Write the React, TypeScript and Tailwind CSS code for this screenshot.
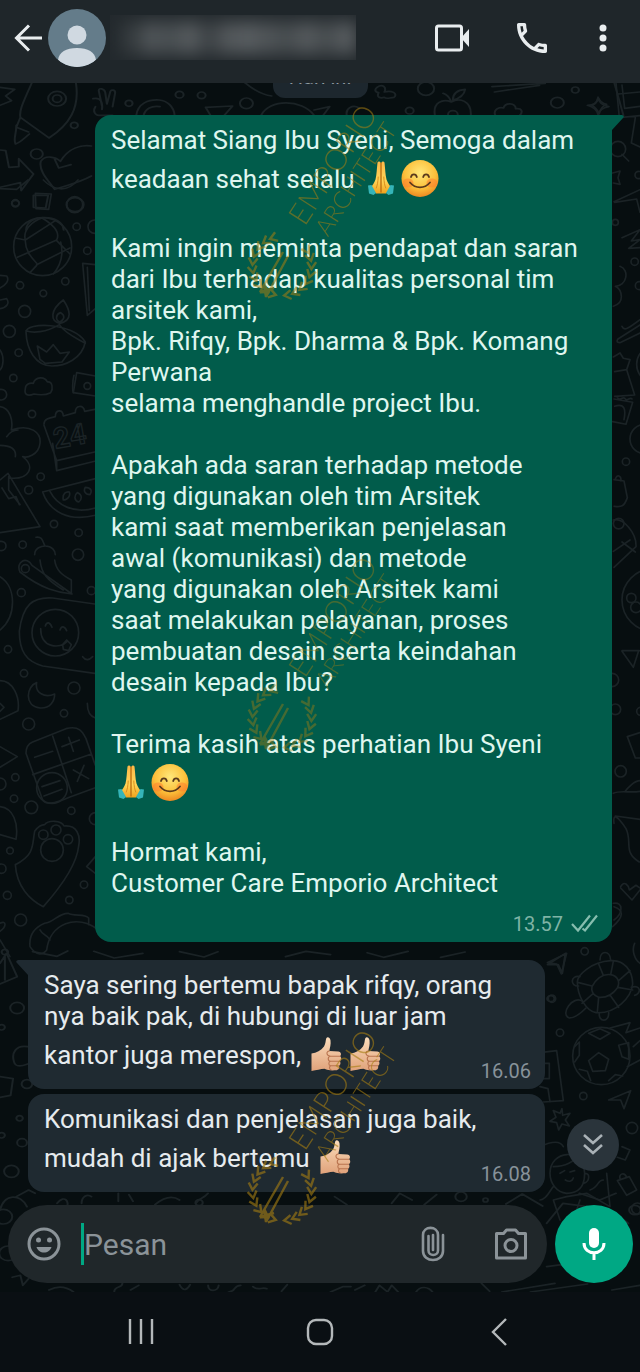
import React, { useState } from 'react';

type EmojiName = 'hands' | 'smile' | 'thumb';

type Line = {
  text?: string;
  emojis?: EmojiName[];
};

type Message = {
  id: number;
  mine: boolean;
  first: boolean;
  time: string;
  lines: Line[];
};

const messages: Message[] = [
  {
    id: 1,
    mine: true,
    first: true,
    time: '13.57',
    lines: [
      { text: 'Selamat Siang Ibu Syeni, Semoga dalam' },
      { text: 'keadaan sehat selalu ', emojis: ['hands', 'smile'] },
      {},
      { text: 'Kami ingin meminta pendapat dan saran' },
      { text: 'dari Ibu terhadap kualitas personal tim' },
      { text: 'arsitek kami,' },
      { text: 'Bpk. Rifqy, Bpk. Dharma & Bpk. Komang' },
      { text: 'Perwana' },
      { text: 'selama menghandle project Ibu.' },
      {},
      { text: 'Apakah ada saran terhadap metode' },
      { text: 'yang digunakan oleh tim Arsitek' },
      { text: 'kami saat memberikan penjelasan' },
      { text: 'awal (komunikasi) dan metode' },
      { text: 'yang digunakan oleh Arsitek kami' },
      { text: 'saat melakukan pelayanan, proses' },
      { text: 'pembuatan desain serta keindahan' },
      { text: 'desain kepada Ibu?' },
      {},
      { text: 'Terima kasih atas perhatian Ibu Syeni' },
      { emojis: ['hands', 'smile'] },
      {},
      { text: 'Hormat kami,' },
      { text: 'Customer Care Emporio Architect' },
    ],
  },
  {
    id: 2,
    mine: false,
    first: true,
    time: '16.06',
    lines: [
      { text: 'Saya sering bertemu bapak rifqy, orang' },
      { text: 'nya baik pak, di hubungi di luar jam' },
      { text: 'kantor juga merespon, ', emojis: ['thumb', 'thumb'] },
    ],
  },
  {
    id: 3,
    mine: false,
    first: false,
    time: '16.08',
    lines: [{ text: 'Komunikasi dan penjelasan juga baik,' }, { text: 'mudah di ajak bertemu ', emojis: ['thumb'] }],
  },
];

function Emoji({ name }: { name: EmojiName }) {
  if (name === 'smile') {
    return (
      <svg role="img" aria-label="smile" className="w-[39px] h-[38px] shrink-0" viewBox="0 0 39 38">
        <circle cx="20" cy="18.500" r="18.500" fill="url(#face)" />
        <ellipse cx="8" cy="23" rx="5.500" ry="4.500" fill="#ff7d2e" opacity="0.55" />
        <ellipse cx="32" cy="23" rx="5.500" ry="4.500" fill="#ff7d2e" opacity="0.55" />
        <g fill="none" stroke="#5b3a1c" strokeWidth="1.800" strokeLinecap="round">
          <path d="M11 17c.8-3.600 5-3.600 5.800 0M23.200 17c.8-3.600 5-3.600 5.800 0" />
          <path d="M10 22.500c5.500 6.500 14.500 6.500 20 0" />
        </g>
      </svg>
    );
  }

  if (name === 'hands') {
    return (
      <svg role="img" aria-label="folded hands" className="w-[39px] h-[38px] shrink-0" viewBox="0 0 39 38">
        <path d="M16.500 2.500c.8-1.500 2.400-1.200 3 .3h1c.6-1.500 2.200-1.800 3-.3.8 7 .8 12 2 17 1.200 4 3.500 5.500 4.500 8.500L25 33.500H15L10 28c1-3 3.300-4.500 4.500-8.500 1.200-5 1.200-10 2-17z" fill="url(#skin)" />
        <path d="M20 3v29" fill="none" stroke="#b8690f" strokeWidth="1.300" strokeLinecap="round" />
        <path d="M17.200 17c-.2 5-.8 8-1.900 11M22.800 17c.2 5 .8 8 1.900 11" fill="none" stroke="#d98f1c" strokeWidth="1" strokeLinecap="round" />
        <path d="M7 25.500l3.500-.5 4.500 8-2.500 2-4.500-1.500z" fill="#35b4b8" />
        <path d="M33 25.500l-3.500-.5-4.500 8 2.500 2 4.500-1.500z" fill="#35b4b8" />
      </svg>
    );
  }

  return (
    <svg role="img" aria-label="thumbs up" className="w-[39px] h-[38px] shrink-0" viewBox="0 0 39 38">
      <path d="M4.500 17.500c5-.5 9.500-3 12.500-7 1.800-3 1.500-6 2.300-8.300 1.200-1.800 3.700-.6 4.200 2 .6 4-.6 7.500-1.200 10.800l9 .5c3 .4 3.300 3.300 1.800 4.700 1.800 1.600 1.500 4-.3 5 1.200 1.800.7 3.800-.8 4.600.8 2.500-.7 4.400-3 4.500-5 .4-8.500 0-11.500-1.500-4 .4-8 1.200-13 2.200z" fill="url(#thumb)" />
      <path d="M33 20.200H23.500c-3 .3-3 4.700 0 5h9.300M23.700 25.200c-2.500.3-2.500 4.300 0 4.600H32M24 29.800c-2 .4-2 3.600 0 4M22.300 15c-3.300.3-3.300 4.700 1.200 5.200" fill="none" stroke="#b9744f" strokeWidth="1.100" strokeLinecap="round" />
    </svg>
  );
}

// shared gradients of the emojis
function EmojiDefs() {
  return (
    <svg className="absolute w-0 h-0" aria-hidden="true">
      <defs>
        <radialGradient id="face" cx="0.500" cy="0.350" r="0.700">
          <stop offset="0" stopColor="#ffe77a" />
          <stop offset="0.600" stopColor="#fcc03a" />
          <stop offset="1" stopColor="#ea7d1c" />
        </radialGradient>
        <linearGradient id="skin" x1="0" y1="0" x2="0" y2="1">
          <stop offset="0" stopColor="#fdb94a" />
          <stop offset="0.600" stopColor="#ffd458" />
          <stop offset="1" stopColor="#f0a21c" />
        </linearGradient>
        <linearGradient id="thumb" x1="0" y1="0" x2="0" y2="1">
          <stop offset="0" stopColor="#fbdcbb" />
          <stop offset="1" stopColor="#e0a27a" />
        </linearGradient>
      </defs>
    </svg>
  );
}

function Dots({ at }: { at: number[][] }) {
  return (
    <>
      {at.map(([x, y, r]) => (
        <circle key={`${x}-${y}`} cx={x} cy={y} r={r} />
      ))}
    </>
  );
}

// doodle wallpaper behind the messages
function Wallpaper() {
  return (
    <svg className="absolute inset-0 w-full h-full" viewBox="0 0 640 1372" preserveAspectRatio="xMidYMin slice" aria-hidden="true" fill="none" stroke="#1b2326" strokeWidth="5" strokeLinecap="round" strokeLinejoin="round">
      {/* upper strip */}
      <g transform="translate(0 0) scale(.408 .3333)">
        <path d="M0 262l36 6-22 20 14 14-28 14M78 248C60 300 46 330 50 352l70 62c50-40 76-90 66-166M50 352l-10 30 30 14M40 376c0 30-8 40-2 56 12-4 20-16 34-30" />
        <path d="M228 296c20-6 24 14 22 32M250 318l-8-46c0-10 14-6 16 6l4 34 8-36c2-10 14-6 12 4l-6 40M234 320c-8 14 0 26 8 26h34" />
        <path d="M334 346c4-36 30-48 56-46 20 2 36 20 38 46M352 346c4-20 20-30 40-26M504 322l66-4-20 28M516 346l-12-24M640 346c20-50 100-50 130 0M600 248c20 20 40 36 66 40M770 330l38-10-16 26M850 346c-4-20 14-34 30-22" />
        <path d="M924 262c14-12 24 0 18 14 18-6 34 4 24 16-14 2-20 6-24 0-10 4-20 0-14-14-10-2-10-10-4-16M1066 346c-6-40 20-50 40-40 20-14 50-4 48 40M1106 306c-4-14-10-22-20-26M1110 300c0-20 10-30 30-32-2 16-10 26-30 32M1206 260l130-10M1212 276l110-20M1214 346c-6-16 8-26 20-22 4-18 30-16 30 2 16-2 18 10 10 20M1440 316c16 0 24-8 26-22 2 14 10 22 26 26-16 4-22 10-26 24-2-14-10-22-26-28M1506 250l22 96M1516 282l52-6" />
        <path d="M0 450l14 2 8 50 24-2 0-24 36 46-30 50-2-24-50 14M100 484c10-20 36-14 48 0 20-40 50-50 76-46M100 484c-6 30 20 60 34 84 26-10 60-20 90-40M134 478l10 26 30-10" />
        <path d="M82 586l36 0-6 38-30-2zM64 690c0-50 90-50 92 0" />
        <Dots at={[[140, 296, 22], [140, 296, 11], [440, 284, 10], [494, 286, 10], [604, 310, 16], [316, 310, 9], [182, 376, 9], [90, 462, 15], [1044, 266, 20], [1004, 332, 10], [1110, 344, 12], [1366, 308, 16], [1410, 270, 9], [38, 610, 9], [184, 614, 21]]} />
      </g>

      {/* left strip, upper half */}
      <g transform="translate(0 180) scale(.3333)">
        <circle cx="128" cy="200" r="87" />
        <path d="M46 174l30 6 90-58M76 180c-8-30 20-56 50-66M76 184c0 30 20 50 34 66M52 232l118-52M110 254l100-50M170 180c10-20 0-40-44-66M170 182l40 40M182 186c10 40 0 70-22 96M110 256l-20 22" />
        <path d="M78 456c0-30 140-30 178 30-10 50-60 72-100 72-50 0-76-50-78-102zM78 452c20 8 60 6 100-18 20 30 60 44 78 56M180 430c-30-6-30-40 10-70 20 30 30 60-10 70M180 426c-16-6-12-24 2-28 14 8 12 20-2 28M120 538l-8-40 28 18 20-22 20 26 28-4-22 30-50 4z" />
        <path d="M76 626c0-14 14-18 24-16 6-20 34-22 42-4 16-2 18 20 10 32-20 10-40 6-50 4-20 8-30 2-26-16M286 588l-56-10-10 60 66 10M248 250l38 4M248 250l14 156 24-20M262 262l6 130" />
        <path d="M132 732c0-14 14-18 34-22 0-22 22-24 24-2l36-10c0-24 24-24 28-4l30-6M132 736l38 106 114-26M158 790l12 82 114-28M170 842v30" />
        <path d="M0 680c30 4 40 40 34 70 60-20 90 10 86 40-4 36-40 44-52 40 40 30 20 70-40 64M20 770c10-14 20-20 34-20M0 796c30 0 50 10 46 34M0 900l24-20 96 160-120 18M26 890v40l34 44M6 924l20 32 22-6 10 24" />
        <path d="M128 936l158-40M128 936c20 60 80 90 158 70M150 934c20 40 70 70 136 50M190 960c-4-20 10-26 18-24 4 10-4 24-18 24M236 966c-14-4-14-20-4-28 16 6 14 22 4 28M270 944c-16 0-20-12-14-22 16 0 22 10 14 22M108 1072c20-4 20 14 26 24M104 1124c0-20 20-26 32-26 20 0 30 14 30 26M0 26l50 2 34-28M130 0c30 30 70 40 104 0" />
        <path d="M106 40l48 2-8 46-38-2zM0 286l20 2c10 14-4 28-20 36M0 360l20-4c10 14 0 26-20 30M222 586c-6 20-4 50-2 52M0 510c14 20 10 50 0 60" />
        <text x="166" y="806" transform="rotate(-10 166 806)" fontFamily="Roboto, sans-serif" fontWeight="700" fontSize="86" strokeWidth="4">
          24
        </text>
        <Dots at={[[46, 70, 11], [224, 74, 24], [230, 140, 11], [262, 212, 11], [284, 140, 20], [60, 316, 11], [130, 340, 10], [196, 304, 11], [74, 394, 18], [28, 454, 18], [56, 518, 11], [40, 594, 11], [96, 702, 11], [262, 618, 10], [122, 890, 11], [86, 930, 12], [162, 1032, 11], [236, 1058, 11], [234, 1124, 17], [68, 1094, 11], [4, 1098, 14], [4, 644, 16]]} />
      </g>

      {/* left strip, lower half */}
      <g transform="translate(0 560) scale(.3333)">
        <path d="M60 36c-14-30 20-50 36-20l120 86c-40-4-90-14-156-66M120 0c4 40 20 60 70 90M164 0c4 30 20 44 50 60v40M0 50c50 30 50 120 0 160" />
        <path d="M284 132l-126-18c-60-4-90 20-100 100 0 60 20 90 70 104l156 22" />
        <circle cx="166" cy="218" r="70" />
        <path d="M122 206c0 60 60 60 78 40M136 198c4-14 14-12 20 4M180 210c4-14 14-12 20 2M188 254l12-14 14 14-8 18-16-4zM248 290c10 14 20 10 30 0" />
        <path d="M110 368c-30 10-40 70 10 76 30 2 44-20 44-42-30 14-60-4-54-34M0 362c40 0 60 50 54 90l-54 26M0 430l12 12-12 12M0 560l52 30-52 32M262 430c0 30 10 40 24 44" />
        <path d="M78 580c0-20 10-30 20-34l100-40c40-10 50 10 60 30l28 80M78 580l50 140c10 14 30 14 80-8l76-28M158 528l56 170M98 644l176-62M104 592l54-18M186 560l52-20M206 532l14 42M220 630l46 26M252 616l-20 48M126 680l54-18M132 708l54-20" />
        <circle cx="156" cy="684" r="46" />
        <path d="M0 740c40 4 56 50 48 98l-48-14M46 914c60-30 50-60 58-100 10-14 20-20 30-20 10-14 50-14 58 4 40-4 50 30 44 60-6 60-60 130-106 182-40-20-80-60-84-126M286 890l-26 30 26 20" />
        <circle cx="156" cy="870" r="34" />
        <path d="M90 1160c-4-40 20-60 44-70 30-4 40-30 70-30 20 10 50 0 62 14v20M90 1160c20 30 40 24 50 10 10-80 90-110 156-60M120 1110c10 20 20 10 30 30M0 1090c20-10 20 10 0 24M0 1140l30 50" />
        <Dots at={[[76, 26, 12], [64, 98, 12], [274, 92, 12], [24, 268, 11], [72, 340, 11], [222, 384, 18], [192, 460, 11], [86, 492, 18], [46, 652, 11], [42, 716, 11], [94, 742, 19], [214, 752, 11], [0, 672, 18], [130, 824, 14], [168, 810, 15], [204, 838, 14], [30, 872, 10], [252, 974, 11], [208, 1020, 11], [22, 1006, 12], [62, 1080, 18], [4, 926, 14], [286, 776, 18]]} />
      </g>

      {/* right edge */}
      <g transform="translate(590 83) scale(.3333)">
        <path d="M4 66c14 0 18-10 20-24 6 14 12 20 26 22-14 6-20 14-22 28-6-12-12-20-24-26M78 0l10 104 62-6M96 6l8 70 46-6M136 104l-12 76 26 12M96 214l20 20M68 270l22-6-6 20 6 20-20-4M72 356l78-36M74 358l66-10 10 40M96 464l54-24-26 34 26-4-34 26 34-2M90 550c30 10 20 60-14 60 20 10 30 50-6 60M96 730c6 14 14 10 54-20M84 768l66-42M84 768c-8 10 4 14 12 8l54-26M70 822l20-12 10 16 20 4-10 30-36 6M110 860l24 76-60 4M80 940c10 20 20-4 26 8 6 8 14-8 20 0M72 948l56 10-20 66-40-8M74 970c30-10 34 10 28 40M72 1190l30 4 10 50c-10 30-20 28-40 26M76 1190c4-20 20-10 16 4" />
        <Dots at={[[84, 198, 23], [146, 276, 11], [76, 418, 9], [134, 536, 11], [148, 608, 12], [196, 844, 56], [164, 1068, 44], [108, 1136, 11], [86, 1322, 16]]} />
      </g>
      <g transform="translate(590 510) scale(.3333)">
        <path d="M70 30c30-8 70 40 68 80l-66 62M70 124l50-34M96 96l40 30M96 422h52M96 424l34 48 16-50M112 680l38-12M112 680l24 64h14M70 850c20-10 50 0 80-6M104 846c10-14 30-34 46-34M72 940c-4-30 10-24 36 16 20 40-10 70 40 100M76 918l74 10M92 1130c10-20 24-4 26 10l20-14 12 8M92 1134l34 36 24-30M70 1180c30-6 30 30 2 50" />
        <Dots at={[[190, 270, 94], [124, 264, 14], [138, 292, 16], [66, 510, 20], [76, 598, 16], [152, 604, 12], [92, 784, 17]]} />
      </g>
      <g transform="translate(540 900) scale(.3333)">
        <path d="M22 188l58-28-16 62-14-30zM222 20c30 10 30 30-4 60M284 130c-10 20 0 50 16 60M180 180c0-30 30-30 32 0M120 230c-30-6-30 30-4 28M128 304c-30-20-70 40-40 50 20 0 40-20 50-30M178 338c-4 30 30 30 28 0M274 262c30-10 30 20 10 24" />
        <path d="M112 246c0-20 40-60 100-64 40-4 66 30 66 70-4 40-50 90-110 86-30-6-56-50-56-92zM156 260c10-20 30-40 56-36 20 4 30 20 20 40-10 14-30 30-56 28-10-4-24-14-20-32zM156 258l-40-10M160 280l-34 30M190 226l-14-34M212 224l8-40M236 242l34-30M234 262l44 8M212 288l24 34M176 292l-4 44" />
        <circle cx="184" cy="468" r="86" />
        <path d="M176 458l30 20-10 34-38 2-12-32zM146 400l34-14 30 14-30 18zM104 440l14-14v40l-14 20M236 436l30-8v50l-20-8zM118 508l24 6 10 28M206 542l20-18 22 4M210 384l60-16-12 30 42-14M262 500l38-20M280 440l20-18M0 458l50-6 20 150-60 4M0 490h28v46h-28M0 560l24 6 6 40M66 626l2 20 22-6-14 20 12 18-22-6-10 18-6-22-20-4 18-12-8-20 20 8zM206 600l66-28-20 54-10-26zM246 740l24 10-14 30-24-8M232 842l36-12 22 40-30 16zM240 836c-4-16 14-20 20-4" />
        <path d="M30 820c0-70 100-80 104 0 0 60-40 60-54 60-30-2-50-30-50-60M40 800c30 0 60-10 80-40M60 820l14-8M90 816l14-4M76 840c10 6 20 6 24-6M136 820c14 0 14 24-4 30M0 900c20 0 30-30 40-40M60 960l-20-60 40-10 60-10 70 40-10-100M0 740c30-14 60-20 70 0M100 960l20-60M150 870c30-10 20-30 40-30" />
        <Dots at={[[134, 154, 11], [36, 296, 11], [60, 398, 11], [130, 588, 11], [276, 684, 17], [292, 926, 17]]} />
      </g>

      {/* left edge and the strip around the composer */}
      <g transform="translate(0 950) scale(.408 .3333)">
        <path d="M0 40l16-30 26 70-42 22M12 20v70M68 290c-30-6-40 20-34 44 4 20 20 14 34 8M0 380l32 6-6 50-26 6M80 5l60 14 26-16M230 4l50 20 70-14M440 5l60 16 34-16M700 20l50-16 60 10M900 8l40 14 60-18M1080 22l60-16M40 740l30-20 16 10M1342 44l44-34-8 60-10-26z" />
        <Dots at={[[12, 6, 8], [42, 174, 17], [66, 402, 13], [48, 505, 8], [54, 578, 12], [28, 664, 18], [4, 232, 8], [4, 556, 8], [1350, 146, 9]]} />
      </g>
      <g transform="translate(0 1190) scale(.408 .3333)">
        <path d="M0 60c10-50 50-50 66-10M30 262l20-6 6 30 14-20M140 40c20-30 30 0 24 8M200 40c0-20 14-30 24-20M290 10v24M316 14l10 20M380 44c20-20 40-30 60-14M480 40c10-20 16-10 30-30M820 20l30 24M960 40l20-30 30 20M1040 44l30-30M1240 42l40-30 50 36M1340 100l40-60 60 10 10 20M1420 10l50 20 40-20M120 300c20-12 40-12 60 6M280 306c0-20 20-10 20-26M320 300l20-14M440 284c10 24 20 14 26 0M510 286c0 20 24 20 26 0M560 306c20 0 10-20 30-20M620 290c14 14 20 0 34 6M690 304l14-20M810 306l30-16 20 0M870 300l24-14M920 306l10-20 20 20 10-20 16 20M1020 306c10-20 30-16 40 0M1180 280l20 24M1230 306l130-26M1300 306l140-24M1500 300l68-14M1340 230l60-10M1480 90c14-20 40-10 60 10" />
        <Dots at={[[1130, 20, 14], [1190, 30, 6], [488, 38, 9], [1556, 60, 14], [8, 80, 22], [20, 190, 22]]} />
      </g>
    </svg>
  );
}

// angles of the laurel leaves, clockwise from the top
const leftLeaves = [-164, -148, -132, -116, -100, -84, -68, -52, -36, -20];
const rightLeaves = [60, 76, 92, 108, 124, 140, 156, 172];

// laurel wreath and studio name, written upwards
function Brand({ y, opacity }: { y: number; opacity: number }) {
  return (
    <g transform={`translate(282 ${y})`} opacity={opacity}>
      <g stroke="#a67e12" strokeWidth="2.400" fill="none">
        {leftLeaves.map((angle) => (
          <path key={angle} d="M5-34L-2-29.500 5-25" transform={`rotate(${angle})`} />
        ))}
        {rightLeaves.map((angle) => (
          <path key={angle} d="M-5-34L2-29.500-5-25" transform={`rotate(${angle})`} />
        ))}
        <path d="M-16 31L6-10M-22 26L1-14M-22 26l14-4M-16 31l-2-12" />
      </g>
      <g transform="rotate(-57)" fill="#a67e12" fontFamily="Lato, sans-serif" fontWeight="300">
        <text x="45" y="-2" fontSize="30">
          EMPORIO
        </text>
        <text x="49" y="23" fontSize="24">
          ARCHITECT
        </text>
      </g>
    </g>
  );
}

function Watermark() {
  return (
    <svg className="absolute inset-0 w-full h-full pointer-events-none" viewBox="0 0 640 1372" preserveAspectRatio="xMidYMin slice">
      <Brand y={266} opacity={0.55} />
      <Brand y={718} opacity={0.42} />
      <Brand y={1191} opacity={0.6} />
    </svg>
  );
}

function Bubble({ message }: { message: Message }) {
  const { mine, first, time, lines } = message;

  return (
    <article className={`relative w-[517px] max-w-full rounded-2xl pt-[10px] pl-4 pr-[14px] pb-[6px] ${mine ? 'self-end bg-[#015c4b] text-[#dff6ef] mb-[18px]' : 'self-start bg-[#1f2a31] text-[#e6ebee] mb-[5px]'}`}>
      {first && mine && (
        <svg className="absolute top-0 -right-3 w-8 h-4" viewBox="0 0 32 16" fill="#015c4b">
          <path d="M0 0h30q3 1 1 3L20 15v1H0z" />
        </svg>
      )}
      {first && !mine && (
        <svg className="absolute top-0 -left-3 w-8 h-4" viewBox="0 0 32 16" fill="#1f2a31">
          <path d="M32 0H2Q-1 1 1 3l11 12v1h20z" />
        </svg>
      )}

      <div className={`relative flex ${mine ? 'flex-col' : 'items-end'}`}>
        <div className={mine ? 'pb-[13px]' : 'flex-1 min-w-0 pb-[5px]'}>
          {lines.map((line, i) => (
            <p key={i} className={`flex items-center whitespace-pre text-[26px] leading-[31px] ${line.emojis ? 'h-[46px]' : 'h-[31px]'}`}>
              {line.text && <span>{line.text}</span>}
              {line.emojis?.map((name, n) => <Emoji key={n} name={name} />)}
            </p>
          ))}
        </div>

        <div className={`flex items-center self-end gap-2 text-xl leading-6 ${mine ? 'text-[#7fb3a5]' : 'text-[#87929a]'}`}>
          <time>{time}</time>
          {mine && (
            <svg className="w-[27px] h-5" viewBox="0 0 27 20" fill="none" stroke="#86bdae" strokeWidth="2.200">
              <path d="M1 10l6 6.500L19 1.500M11.500 14.500l2.500 2L26 1.500" />
            </svg>
          )}
        </div>
      </div>
    </article>
  );
}

// blurred contact name
const smudges = ['bg-[#383e41]', 'bg-[#54595c]', 'bg-[#4d5356]', 'bg-[#5b6063]', 'bg-[#42474a]', 'bg-[#585d60]', 'bg-[#5d6265]', 'bg-[#54595c]', 'bg-[#4c5154]', 'bg-[#5a5f62]', 'bg-[#4c5154]', 'bg-[#5c6164]'];

function Header() {
  return (
    <header className="relative z-10 flex items-center h-[83px] pb-2 pl-3 pr-[29px] bg-[#1f262a] text-[#e9edef]">
      <button aria-label="Kembali" className="w-9">
        <svg className="w-8 h-8" viewBox="0 0 32 32" fill="none" stroke="currentColor" strokeWidth="3">
          <path d="M30 16H5M17 3.500L4.500 16 17 28.500" />
        </svg>
      </button>
      <svg className="w-[58px] h-[58px] rounded-full shrink-0" viewBox="0 0 58 58">
        <rect width="58" height="58" fill="#647c8a" />
        <circle cx="29" cy="26" r="9.500" fill="#d0d9e1" />
        <path d="M10 51c1-8 8-12 19-12s18 4 19 12c-5 5-12 7-19 7s-14-2-19-7z" fill="#d0d9e1" />
      </svg>
      <div className="flex items-center w-[246px] h-[45px] ml-1 bg-[#23292d] overflow-hidden">
        <div className="flex w-full pl-3 blur-sm">
          {smudges.map((color, i) => (
            <span key={i} className={`flex-1 h-8 blur-[3px] ${color}`} />
          ))}
        </div>
      </div>

      <div className="flex items-center justify-between w-44 ml-auto">
        <button aria-label="Panggilan video">
          <svg className="w-[34px] h-[30px]" viewBox="0 0 34 30" fill="none" stroke="currentColor" strokeWidth="3">
            <rect x="1.500" y="3" width="25" height="24" rx="2" />
            <path d="M26 15l8-9v18z" fill="currentColor" stroke="none" />
          </svg>
        </button>
        <button aria-label="Panggilan suara">
          <svg className="w-10 h-10" viewBox="0 0 24 24" fill="currentColor">
            <path d="M6.540 5c.06.890.21 1.760.45 2.590l-1.200 1.200c-.41-1.200-.67-2.470-.76-3.790h1.510m9.860 12.020c.85.240 1.720.39 2.600.45v1.490c-1.320-.09-2.590-.35-3.800-.75l1.200-1.190M7.500 3H4c-.55 0-1 .45-1 1 0 9.390 7.610 17 17 17 .55 0 1-.45 1-1v-3.490c0-.55-.45-1-1-1-1.240 0-2.450-.2-3.570-.57-.1-.04-.21-.05-.31-.05-.26 0-.51.1-.71.290l-2.200 2.200c-2.830-1.450-5.150-3.760-6.590-6.590l2.200-2.200c.28-.28.36-.67.25-1.020C8.700 6.450 8.500 5.250 8.500 4c0-.55-.45-1-1-1z" />
          </svg>
        </button>
        <button aria-label="Opsi lainnya" className="w-4 flex justify-center">
          <svg className="w-2 h-7" viewBox="0 0 8 28" fill="currentColor">
            <circle cx="4" cy="4" r="3.500" />
            <circle cx="4" cy="14" r="3.500" />
            <circle cx="4" cy="24" r="3.500" />
          </svg>
        </button>
      </div>
    </header>
  );
}

function Composer() {
  const [text, setText] = useState('');

  return (
    <form className="relative flex items-center gap-2 pl-2 pr-[7px] pb-[9px]" onSubmit={(e) => e.preventDefault()}>
      <div className="flex items-center flex-1 min-w-0 h-[78px] px-[18px] rounded-full bg-[#20272a] text-[#8b9398]">
        <button type="button" aria-label="Emoji" className="shrink-0">
          <svg className="w-9 h-9" viewBox="0 0 36 36" fill="none" stroke="currentColor" strokeWidth="3">
            <circle cx="18" cy="18" r="15" />
            <g fill="currentColor" stroke="none">
              <circle cx="12.500" cy="14" r="2.500" />
              <circle cx="23.500" cy="14" r="2.500" />
              <path d="M10.500 21h15c-1 3.500-4 5.500-7.500 5.500s-6.500-2-7.500-5.500z" />
            </g>
          </svg>
        </button>
        <input aria-label="Pesan" placeholder="Pesan" value={text} onChange={(e) => setText(e.target.value)} className="flex-1 min-w-0 h-[42px] ml-[19px] border-l-[3px] border-[#00a884] bg-transparent text-[30px] placeholder:text-[#8b9398] outline-none" />
        <button type="button" aria-label="Lampirkan" className="shrink-0 mr-12">
          <svg className="w-6 h-9" viewBox="0 0 24 36" fill="none" stroke="currentColor" strokeWidth="2.600" strokeLinecap="round">
            <path d="M22 9v16c0 12-20 12-20 0V9c0-9.500 15-9.500 15 0v15.500c0 6-9.500 6-9.500 0V10" />
            <path d="M12 9v15" />
          </svg>
        </button>
        <button type="button" aria-label="Kamera" className="shrink-0">
          <svg className="w-9 h-9" viewBox="0 0 36 36" fill="none" stroke="currentColor" strokeWidth="3">
            <path d="M3.500 7.500h7l3-3.500h9l3 3.500h7v24.500h-29z" strokeLinejoin="round" />
            <circle cx="18" cy="19.500" r="6" />
          </svg>
        </button>
      </div>
      <button type="button" aria-label="Rekam suara" className="flex justify-center items-center w-[78px] h-[78px] shrink-0 rounded-full bg-[#00a884] text-white">
        <svg className="w-7 h-8" viewBox="0 0 28 32">
          <rect x="9" y="0" width="10" height="20" rx="5" fill="currentColor" />
          <path d="M4 15c0 13 20 13 20 0M14 24v8" fill="none" stroke="currentColor" strokeWidth="3" />
        </svg>
      </button>
    </form>
  );
}

function SystemBar() {
  return (
    <nav className="relative flex justify-around items-center h-20 px-[51px] bg-[#0a0f13] text-[#b4b8ba]">
      <button aria-label="Aplikasi terbaru">
        <svg className="w-7 h-7" viewBox="0 0 28 28" stroke="currentColor" strokeWidth="2.400">
          <path d="M3 1v25M14 1v25M25 1v25" />
        </svg>
      </button>
      <button aria-label="Beranda">
        <svg className="w-7 h-7" viewBox="0 0 28 28" fill="none" stroke="currentColor" strokeWidth="2.400">
          <rect x="2" y="2" width="24" height="24" rx="8" />
        </svg>
      </button>
      <button aria-label="Kembali ke aplikasi">
        <svg className="w-7 h-7" viewBox="0 0 28 28" fill="none" stroke="currentColor" strokeWidth="2.400">
          <path d="M21 1L8 14l13 13" />
        </svg>
      </button>
    </nav>
  );
}

export default function App() {
  return (
    <div className="relative flex flex-col min-h-screen bg-[#070e10] overflow-hidden" style={{ fontFamily: 'Roboto, sans-serif' }}>
      <EmojiDefs />
      <Wallpaper />
      <Header />

      <main className="relative flex flex-col flex-1 px-7 pb-2">
        <div className="self-center w-[95px] h-[47px] -mt-8 mb-[17px] pt-3 rounded-xl bg-[#1d272e] text-center text-xl leading-7 text-[#8f9aa1]">Hari ini</div>
        {messages.map((message) => (
          <Bubble key={message.id} message={message} />
        ))}
        <button aria-label="Gulir ke bawah" className="absolute right-[21px] bottom-[34px] flex justify-center items-center w-[52px] h-[52px] rounded-full bg-[#2a343b]">
          <svg className="w-5 h-6" viewBox="0 0 20 24" fill="none" stroke="#a9b1b6" strokeWidth="2.600">
            <path d="M1 2l9 8 9-8M1 12l9 8 9-8" />
          </svg>
        </button>
      </main>

      <Composer />
      <SystemBar />
      <Watermark />
    </div>
  );
}
